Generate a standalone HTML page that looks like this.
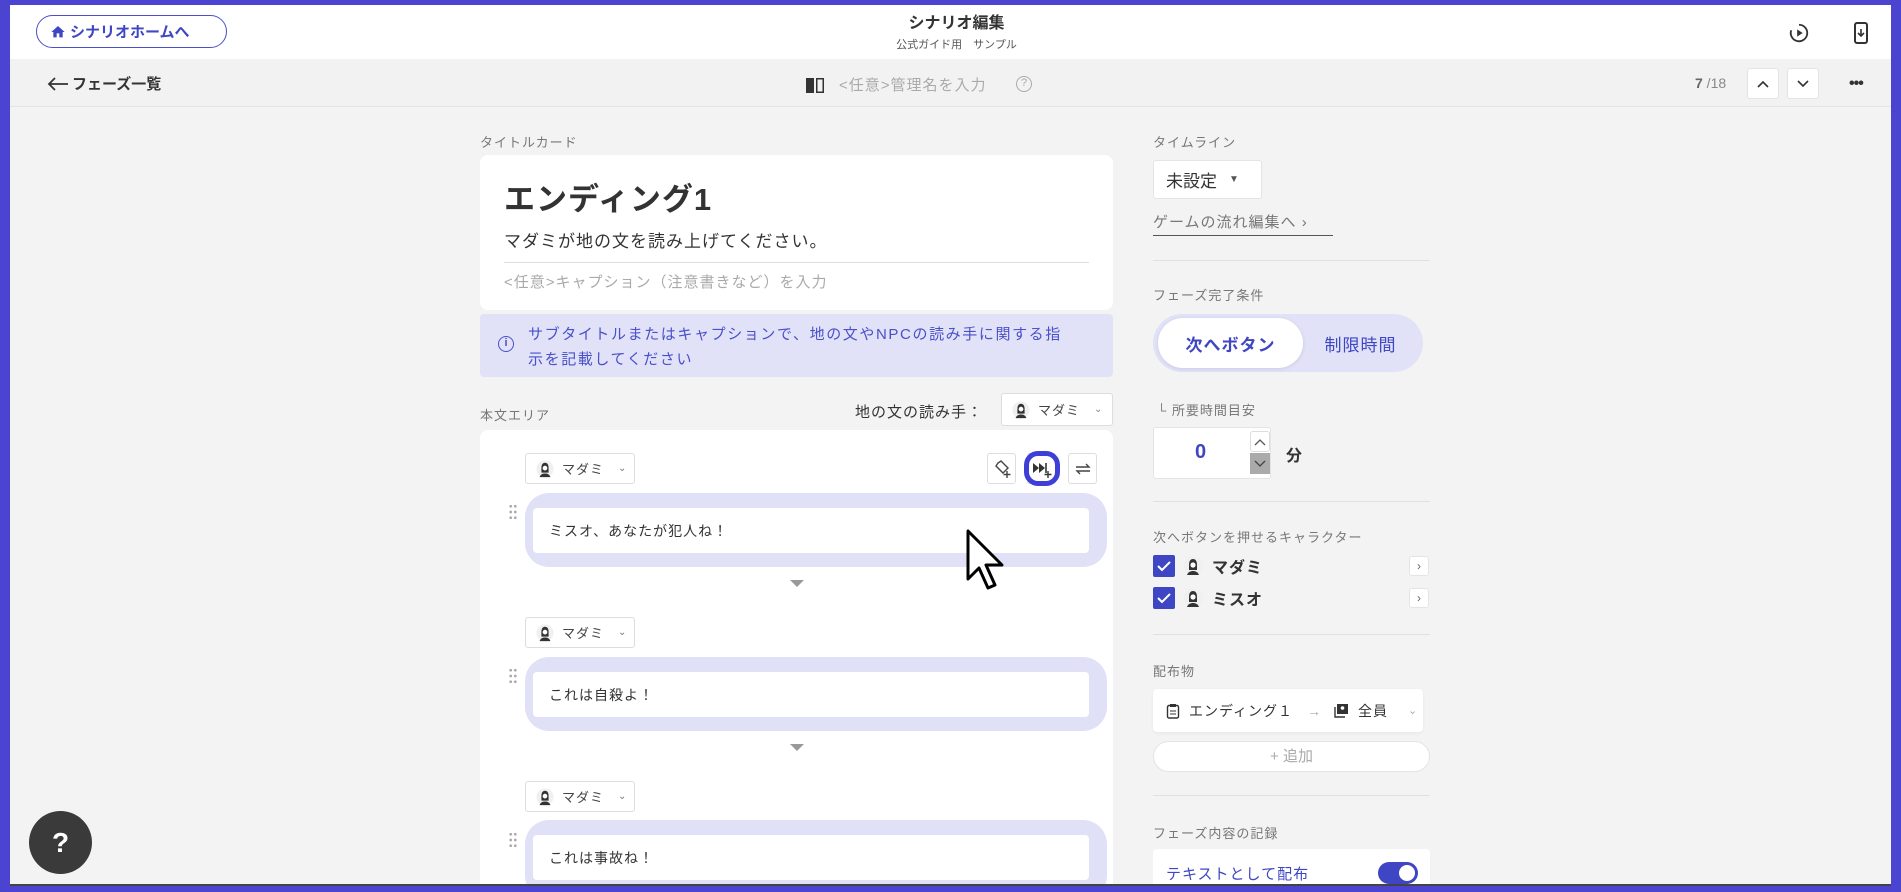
<!DOCTYPE html>
<html><head><meta charset="utf-8">
<style>
*{box-sizing:border-box;margin:0;padding:0}
body{width:1901px;height:892px;overflow:hidden;background:#4a44d0;font-family:"Liberation Sans","Noto Sans CJK JP",sans-serif;color:#333;position:relative}
.a{position:absolute}
#frame{left:10px;top:5px;width:1881px;height:881px;background:#f3f3f3;overflow:hidden;border-bottom:2px solid #444}
.lbl{font-size:13px;color:#777;letter-spacing:1px}
.hr{height:1px;background:#e0e0e0}
.dd{background:#fff;border:1px solid #ddd;border-radius:3px;font-size:13px;color:#444;display:flex;align-items:center;padding-left:10px;letter-spacing:1px}
.bub{background:#e0e1f7;border-radius:24px}
.inner{background:#fff;border-radius:4px;font-size:14px;color:#333;display:flex;align-items:center;padding-left:16px;letter-spacing:1px}
.tri{width:0;height:0;border-left:7px solid transparent;border-right:7px solid transparent;border-top:7px solid #999}
.ib{background:#fff;border:1px solid #ddd;border-radius:3px;display:flex;align-items:center;justify-content:center}
</style></head><body>
<svg width="0" height="0" style="position:absolute"><defs>
<symbol id="av" viewBox="0 0 20 20"><circle cx="10" cy="10" r="9.5" fill="#f0f0f0"/><path d="M6 9c0-4 1.5-6 4-6s4 2 4 6v5H6z" fill="#333"/><circle cx="10" cy="9" r="2.6" fill="#fff"/><path d="M4 19c1-3 3.5-4 6-4s5 1 6 4z" fill="#333"/></symbol>
<symbol id="dr" viewBox="0 0 8 14"><g fill="#aaa"><circle cx="2" cy="2" r="1.2"/><circle cx="6" cy="2" r="1.2"/><circle cx="2" cy="7" r="1.2"/><circle cx="6" cy="7" r="1.2"/><circle cx="2" cy="12" r="1.2"/><circle cx="6" cy="12" r="1.2"/></g></symbol>
</defs></svg>
<div id="frame" class="a">
<div class="a" style="left:0;top:0;width:1881px;height:54px;background:#fff"></div>
<div class="a" style="left:26px;top:10px;width:191px;height:33px;border:1.5px solid #4a50c8;border-radius:17px;color:#3f46c4;font-weight:bold;font-size:15px;display:flex;align-items:center;padding-left:13px;gap:4px">
<svg width="16" height="16" viewBox="0 0 24 24"><path d="M10 20v-6h4v6h5v-8h3L12 3 2 12h3v8z" fill="#3f46c4"/></svg>シナリオホームへ</div>
<div class="a" style="left:0;width:1881px;top:4px;text-align:center;font-size:16px;font-weight:bold;color:#333;padding-left:12px">シナリオ編集</div>
<div class="a" style="left:0;width:1881px;top:31px;text-align:center;font-size:11px;color:#555;padding-left:12px">公式ガイド用　サンプル</div>
<svg class="a" style="left:1778px;top:17px" width="22" height="22" viewBox="0 0 24 24"><path d="M12 3a9 9 0 1 1-8.5 6" fill="none" stroke="#333" stroke-width="2"/><path d="M10 8v8l6-4z" fill="#333"/></svg>
<svg class="a" style="left:1841px;top:17px" width="20" height="22" viewBox="0 0 20 22"><rect x="4" y="1" width="12" height="20" rx="2" fill="none" stroke="#333" stroke-width="2"/><path d="M10 7v7M7 11l3 3 3-3" stroke="#333" stroke-width="1.6" fill="none"/></svg>
<div class="a" style="left:0;top:54px;width:1881px;height:48px;background:#f2f2f2;border-bottom:1px solid #e4e4e4"></div>
<div class="a" style="left:37px;top:68px;font-size:15px;font-weight:bold;color:#333;display:flex;align-items:center;gap:3px">
<svg width="22" height="14" viewBox="0 0 22 14"><path d="M21 7H2M8 1L2 7l6 6" fill="none" stroke="#333" stroke-width="1.8"/></svg>フェーズ一覧</div>
<svg class="a" style="left:795px;top:72px" width="20" height="17" viewBox="0 0 20 17"><path d="M1 1h8v15H1zM11 1h8v15h-8z" fill="#333"/><path d="M12.5 2.5h5v12h-5z" fill="#f2f2f2"/></svg>
<div class="a" style="left:829px;top:69px;font-size:15px;color:#aaa;letter-spacing:1px">&lt;任意&gt;管理名を入力</div>
<div class="a" style="left:1006px;top:71px;width:16px;height:16px;border:1.5px solid #aaa;border-radius:50%;font-size:11px;color:#aaa;text-align:center;line-height:13px">?</div>
<div class="a" style="left:1685px;top:70px;font-size:14px;color:#888"><b style="color:#666">7</b> /18</div>
<div class="a ib" style="left:1737px;top:63px;width:32px;height:31px;border-color:#e4e4e4"><svg width="14" height="10"><path d="M2 8l5-5 5 5" fill="none" stroke="#333" stroke-width="1.6"/></svg></div>
<div class="a ib" style="left:1777px;top:63px;width:32px;height:31px;border-color:#e4e4e4"><svg width="14" height="10"><path d="M2 2l5 5 5-5" fill="none" stroke="#333" stroke-width="1.6"/></svg></div>
<div class="a" style="left:1839px;top:70px;font-size:16px;font-weight:bold;letter-spacing:-1px">•••</div>

<div class="a lbl" style="left:470px;top:127px">タイトルカード</div>
<div class="a" style="left:470px;top:150px;width:633px;height:155px;background:#fff;border-radius:8px"></div>
<div class="a" style="left:494px;top:169px;font-size:31px;font-weight:bold;color:#333;letter-spacing:1px">エンディング1</div>
<div class="a" style="left:494px;top:222px;font-size:17px;color:#333;letter-spacing:1px">マダミが地の文を読み上げてください。</div>
<div class="a" style="left:494px;top:257px;width:585px;height:1px;background:#ddd"></div>
<div class="a" style="left:494px;top:266px;font-size:15px;color:#aaa;letter-spacing:1px">&lt;任意&gt;キャプション（注意書きなど）を入力</div>
<div class="a" style="left:470px;top:309px;width:633px;height:63px;background:#e1e2f8;border-radius:4px"></div>
<div class="a" style="left:488px;top:331px;width:16px;height:16px;border:1.5px solid #4a50c8;border-radius:50%;font-size:11px;color:#4a50c8;text-align:center;line-height:13px;font-weight:bold">i</div>
<div class="a" style="left:518px;top:317px;width:545px;font-size:15px;color:#4a50c8;line-height:25px;letter-spacing:1.6px">サブタイトルまたはキャプションで、地の文やNPCの読み手に関する指示を記載してください</div>

<div class="a lbl" style="left:470px;top:400px">本文エリア</div>
<div class="a" style="left:845px;top:396px;font-size:15px;color:#333;letter-spacing:1px">地の文の読み手：</div>
<div class="a dd" style="left:991px;top:388px;width:112px;height:33px"><svg width="18" height="18"><use href="#av"/></svg><span style="margin-left:8px">マダミ</span><span style="margin-left:14px;color:#888;font-size:10px">⌄</span></div>

<div class="a" style="left:470px;top:425px;width:633px;height:470px;background:#fff;border-radius:8px"></div>

<div class="a dd" style="left:515px;top:448px;width:110px;height:31px"><svg width="18" height="18"><use href="#av"/></svg><span style="margin-left:8px">マダミ</span><span style="margin-left:14px;color:#777;font-size:10px">⌄</span></div>
<div class="a ib" style="left:977px;top:448px;width:29px;height:31px"><svg width="20" height="20" viewBox="0 0 20 20"><path d="M9 2l7 7-5 5-7-7 2-3z" fill="none" stroke="#444" stroke-width="1.4"/><path d="M15 12v7M11.5 15.5h7" stroke="#444" stroke-width="1.4"/></svg></div>
<div class="a ib" style="left:1058px;top:448px;width:29px;height:31px"><svg width="16" height="14" viewBox="0 0 16 14"><path d="M1 5h13l-3-3M15 9H2l3 3" fill="none" stroke="#444" stroke-width="1.4"/></svg></div>
<div class="a ib" style="left:1017px;top:448px;width:29px;height:31px"></div>
<div class="a" style="left:1014px;top:446px;width:36px;height:35px;border:5px solid #3d3fd6;border-radius:14px;display:flex;align-items:center;justify-content:center"><svg width="20" height="18" viewBox="0 0 20 18"><path d="M1 3l6 5-6 5zM7 3l6 5-6 5z" fill="#333"/><path d="M14 3v10" stroke="#333" stroke-width="1.6"/><path d="M16 11v7M12.5 14.5h7" stroke="#333" stroke-width="1.4"/></svg></div>
<svg class="a" style="left:498px;top:499px" width="10" height="16"><use href="#dr"/></svg>
<div class="a bub" style="left:515px;top:488px;width:582px;height:74px"></div>
<div class="a inner" style="left:523px;top:503px;width:556px;height:45px">ミスオ、あなたが犯人ね！</div>
<div class="a tri" style="left:780px;top:575px"></div>

<div class="a dd" style="left:515px;top:612px;width:110px;height:31px"><svg width="18" height="18"><use href="#av"/></svg><span style="margin-left:8px">マダミ</span><span style="margin-left:14px;color:#777;font-size:10px">⌄</span></div>
<svg class="a" style="left:498px;top:663px" width="10" height="16"><use href="#dr"/></svg>
<div class="a bub" style="left:515px;top:652px;width:582px;height:74px"></div>
<div class="a inner" style="left:523px;top:667px;width:556px;height:45px">これは自殺よ！</div>
<div class="a tri" style="left:780px;top:739px"></div>

<div class="a dd" style="left:515px;top:776px;width:110px;height:31px"><svg width="18" height="18"><use href="#av"/></svg><span style="margin-left:8px">マダミ</span><span style="margin-left:14px;color:#777;font-size:10px">⌄</span></div>
<svg class="a" style="left:498px;top:827px" width="10" height="16"><use href="#dr"/></svg>
<div class="a bub" style="left:515px;top:815px;width:582px;height:80px"></div>
<div class="a inner" style="left:523px;top:830px;width:556px;height:45px">これは事故ね！</div>

<svg class="a" style="left:955px;top:523px" width="42" height="64" viewBox="0 0 42 64"><path d="M3 3v48l11-11 9 20 7-3-9-20h16z" fill="#fff" stroke="#000" stroke-width="3" stroke-linejoin="round"/></svg>

<div class="a lbl" style="left:1143px;top:127px">タイムライン</div>
<div class="a" style="left:1143px;top:155px;width:109px;height:39px;background:#fff;border:1px solid #e4e4e4;border-radius:3px;font-size:17px;color:#333;display:flex;align-items:center;padding-left:12px">未設定<span style="margin-left:12px;font-size:10px;color:#555">▼</span></div>
<div class="a" style="left:1143px;top:206px;font-size:15px;color:#777;letter-spacing:1px;border-bottom:1.5px solid #555;padding-bottom:3px;width:180px">ゲームの流れ編集へ ›</div>
<div class="a hr" style="left:1143px;top:255px;width:277px"></div>
<div class="a lbl" style="left:1143px;top:280px">フェーズ完了条件</div>
<div class="a" style="left:1143px;top:309px;width:270px;height:58px;background:#e1e2f8;border-radius:29px"></div>
<div class="a" style="left:1148px;top:313px;width:145px;height:50px;background:#fff;border-radius:25px;box-shadow:0 1px 4px rgba(0,0,0,.1);display:flex;align-items:center;justify-content:center;font-size:17px;font-weight:bold;color:#3f46c4;letter-spacing:1px">次へボタン</div>
<div class="a" style="left:1293px;top:313px;width:115px;height:50px;display:flex;align-items:center;justify-content:center;font-size:17px;color:#3f46c4;letter-spacing:1px">制限時間</div>
<div class="a lbl" style="left:1147px;top:395px">└ 所要時間目安</div>
<div class="a" style="left:1143px;top:422px;width:118px;height:52px;background:#fff;border:1px solid #e4e4e4;border-radius:3px"></div>
<div class="a" style="left:1185px;top:436px;font-size:20px;font-weight:bold;color:#3f46c4">0</div>
<div class="a ib" style="left:1240px;top:426px;width:20px;height:21px"><svg width="12" height="8"><path d="M1 7l5-5 5 5" fill="none" stroke="#555" stroke-width="1.3"/></svg></div>
<div class="a" style="left:1240px;top:448px;width:20px;height:21px;background:#aaa;display:flex;align-items:center;justify-content:center"><svg width="12" height="8"><path d="M1 1l5 5 5-5" fill="none" stroke="#444" stroke-width="1.3"/></svg></div>
<div class="a" style="left:1276px;top:437px;font-size:16px;font-weight:bold;color:#333">分</div>
<div class="a hr" style="left:1143px;top:496px;width:277px"></div>
<div class="a lbl" style="left:1143px;top:522px">次へボタンを押せるキャラクター</div>
<div class="a" style="left:1143px;top:550px;width:22px;height:22px;background:#3f46c4;border-radius:2px"><svg width="22" height="22"><path d="M5 11l4 4 8-8" fill="none" stroke="#fff" stroke-width="2"/></svg></div>
<svg class="a" style="left:1173px;top:551px" width="20" height="20"><use href="#av"/></svg>
<div class="a" style="left:1202px;top:549px;font-size:16px;font-weight:bold;color:#333;letter-spacing:1px">マダミ</div>
<div class="a ib" style="left:1399px;top:551px;width:20px;height:20px;border-color:#e4e4e4;font-size:12px;color:#666">›</div>
<div class="a" style="left:1143px;top:582px;width:22px;height:22px;background:#3f46c4;border-radius:2px"><svg width="22" height="22"><path d="M5 11l4 4 8-8" fill="none" stroke="#fff" stroke-width="2"/></svg></div>
<svg class="a" style="left:1173px;top:583px" width="20" height="20"><use href="#av"/></svg>
<div class="a" style="left:1202px;top:581px;font-size:16px;font-weight:bold;color:#333;letter-spacing:1px">ミスオ</div>
<div class="a ib" style="left:1399px;top:583px;width:20px;height:20px;border-color:#e4e4e4;font-size:12px;color:#666">›</div>
<div class="a hr" style="left:1143px;top:629px;width:277px"></div>
<div class="a lbl" style="left:1143px;top:656px">配布物</div>
<div class="a" style="left:1143px;top:684px;width:270px;height:43px;background:#fff;border-radius:4px;box-shadow:0 1px 3px rgba(0,0,0,.06);display:flex;align-items:center;padding-left:13px;font-size:14px;color:#333;letter-spacing:1px">
<svg width="14" height="16" viewBox="0 0 14 16"><rect x="1.5" y="2.5" width="11" height="12.5" rx="1.5" fill="none" stroke="#333" stroke-width="1.4"/><rect x="4" y="1" width="6" height="3" fill="#333"/><path d="M4 8h6M4 11h6" stroke="#333"/></svg>
<span style="margin-left:9px">エンディング１</span><span style="margin-left:14px;color:#aaa">→</span>
<svg style="margin-left:12px" width="15" height="15" viewBox="0 0 15 15"><rect x="3" y="1" width="11" height="10" fill="#333"/><path d="M1 4v10h10" fill="none" stroke="#333" stroke-width="1.4"/><circle cx="8.5" cy="5" r="1.8" fill="#fff"/></svg>
<span style="margin-left:9px">全員</span><span style="margin-left:20px;color:#aaa;font-size:11px">⌄</span></div>
<div class="a" style="left:1143px;top:736px;width:277px;height:31px;background:#fff;border:1px solid #e4e4e4;border-radius:16px;text-align:center;line-height:29px;font-size:15px;color:#aaa">+ 追加</div>
<div class="a hr" style="left:1143px;top:790px;width:277px"></div>
<div class="a lbl" style="left:1143px;top:818px">フェーズ内容の記録</div>
<div class="a" style="left:1143px;top:844px;width:277px;height:50px;background:#fff;border-radius:4px"></div>
<div class="a" style="left:1156px;top:858px;font-size:15px;color:#3f46c4;letter-spacing:1px">テキストとして配布</div>
<div class="a" style="left:1368px;top:857px;width:40px;height:22px;background:#3f46c4;border-radius:11px"><div style="position:absolute;right:3px;top:3px;width:16px;height:16px;background:#fff;border-radius:50%"></div></div>

<div class="a" style="left:19px;top:806px;width:63px;height:63px;background:#3a3a3a;border-radius:50%;color:#fff;font-size:28px;font-weight:bold;text-align:center;line-height:63px">?</div>
</div>
</body></html>
